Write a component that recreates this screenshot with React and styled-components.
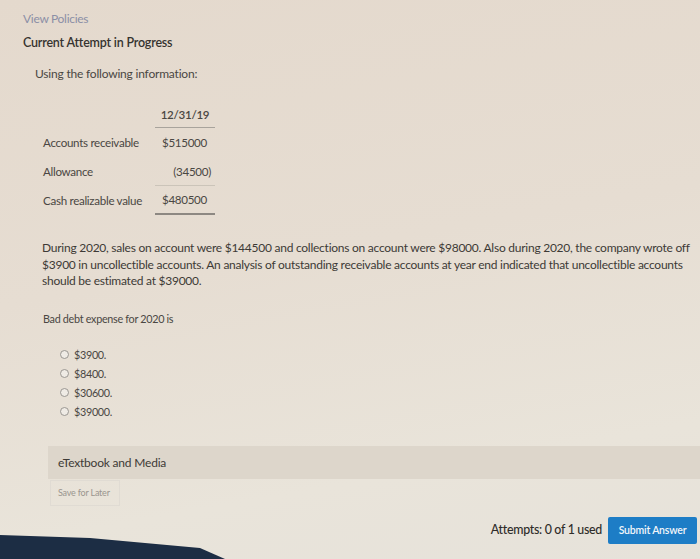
import React from "react";
import styled, { createGlobalStyle } from "styled-components";

const Global = createGlobalStyle`
  html, body { margin: 0; padding: 0; }
  body {
    width: 700px; height: 559px; overflow: hidden;
    font-family: Lato, "Open Sans", "Liberation Sans", sans-serif;
    color: #3a3835;
  }
`;

const Page = styled.div`
  position: relative;
  width: 700px;
  height: 559px;
  overflow: hidden;
  box-sizing: border-box;
  padding: 11px 0 0 23px;
  background: linear-gradient(170deg, #e4d9cd 0%, #e6ddd2 45%, #e9e4da 80%, #e6e2da 100%);
  display: flex;
  flex-direction: column;
`;

const ViewLink = styled.div`
  font-size: 12px;
  color: #8b8fa6;
  letter-spacing: -0.3px;
  line-height: 16px;
`;

const AttemptTitle = styled.div`
  margin-top: 8px;
  font-size: 12.5px;
  font-weight: 600;
  color: #35332f;
  line-height: 16px;
  letter-spacing: -0.2px;
`;

const Question = styled.div`
  padding-left: 12px;
  margin-top: 15px;
  display: flex;
  flex-direction: column;
`;

const Lead = styled.div`
  font-size: 12px;
  color: #4a4743;
  line-height: 16px;
  letter-spacing: -0.2px;
`;

const Table = styled.div`
  margin-top: 19px;
  margin-left: 8px;
  display: grid;
  grid-template-columns: 112px 60px;
  font-size: 11.6px;
  color: #4a4743;
  letter-spacing: -0.3px;
`;

const Cell = styled.div`
  height: ${(p) => p.$h || 28}px;
  display: flex;
  align-items: center;
  justify-content: ${(p) => p.$align || "flex-start"};
  padding-left: ${(p) => p.$pl || 0}px;
  padding-right: ${(p) => p.$pr || 0}px;
  box-sizing: border-box;
  border-bottom: ${(p) => p.$border || "none"};
  font-weight: ${(p) => (p.$bold ? 600 : 400)};
  white-space: nowrap;
`;

const Paragraph = styled.p`
  margin: 25px 0 0 7px;
  width: 652px;
  font-size: 12px;
  line-height: 16.5px;
  color: #3d3a36;
  letter-spacing: -0.25px;
`;

const Prompt = styled.div`
  margin: 22px 0 0 8px;
  font-size: 10.8px;
  color: #4a4743;
  letter-spacing: -0.3px;
`;

const Options = styled.div`
  margin: 23px 0 0 25px;
  display: flex;
  flex-direction: column;
  gap: 5px;
`;

const Option = styled.label`
  display: flex;
  align-items: center;
  gap: 5px;
  font-size: 10.8px;
  color: #4a4743;
  letter-spacing: -0.3px;
  height: 14px;
`;

const Radio = styled.span`
  width: 7px;
  height: 7px;
  border-radius: 50%;
  border: 1px solid #9a9792;
  background: #efebe5;
`;

const MediaBar = styled.div`
  margin: 27px 0 0 25px;
  height: 33px;
  background: #ddd6cb;
  display: flex;
  align-items: center;
  padding-left: 10px;
  font-size: 12px;
  color: #3d3a36;
  letter-spacing: -0.2px;
`;

const SaveButton = styled.div`
  margin: 1px 0 0 27px;
  width: 70px;
  height: 26px;
  box-sizing: border-box;
  border: 1px solid #e0dbd3;
  display: flex;
  align-items: center;
  padding-left: 7px;
  font-size: 9px;
  color: #9a958e;
  letter-spacing: -0.2px;
`;

const Footer = styled.div`
  margin-top: 11px;
  padding-right: 3px;
  display: flex;
  justify-content: flex-end;
  align-items: center;
  gap: 6px;
`;

const Attempts = styled.div`
  font-size: 12.4px;
  color: #2e2c29;
  letter-spacing: -0.3px;
  font-weight: 500;
  padding-bottom: 2px;
`;

const SubmitButton = styled.button`
  width: 89px;
  height: 27px;
  border: none;
  border-radius: 2px;
  background: #1d7dc6;
  color: #f2f6fa;
  font-family: inherit;
  font-size: 10.5px;
  font-weight: 600;
  letter-spacing: -0.2px;
  padding: 0;
`;

const Bezel = styled.svg`
  position: absolute;
  left: 0;
  bottom: 0;
  width: 700px;
  height: 30px;
`;

const rows = [
  { label: "Accounts receivable", value: "$515000", align: "flex-start" },
  { label: "Allowance", value: "(34500)", align: "flex-end", border: "1px solid #cbc4b9" },
  { label: "Cash realizable value", value: "$480500", align: "flex-start", border: "2px solid #8d8882" },
];

const options = ["$3900.", "$8400.", "$30600.", "$39000."];

export default function App() {
  return (
    <>
      <Global />
      <Page>
        <ViewLink>View Policies</ViewLink>
        <AttemptTitle>Current Attempt in Progress</AttemptTitle>
        <Question>
          <Lead>Using the following information:</Lead>
          <Table>
            <Cell $h={27} />
            <Cell $h={27} $align="center" $bold $border="1px solid #a8a39c">12/31/19</Cell>
            {rows.map((r) => (
              <React.Fragment key={r.label}>
                <Cell $h={29}>{r.label}</Cell>
                <Cell
                  $h={29}
                  $align={r.align}
                  $pl={r.align === "flex-start" ? 7 : 0}
                  $pr={r.align === "flex-end" ? 4 : 0}
                  $border={r.border}
                >
                  {r.value}
                </Cell>
              </React.Fragment>
            ))}
          </Table>
          <Paragraph>
            During 2020, sales on account were $144500 and collections on account were $98000. Also during 2020, the company wrote off $3900 in uncollectible accounts. An analysis of outstanding receivable accounts at year end indicated that uncollectible accounts should be estimated at $39000.
          </Paragraph>
          <Prompt>Bad debt expense for 2020 is</Prompt>
          <Options>
            {options.map((o) => (
              <Option key={o}>
                <Radio />
                {o}
              </Option>
            ))}
          </Options>
        </Question>
        <MediaBar>eTextbook and Media</MediaBar>
        <SaveButton>Save for Later</SaveButton>
        <Footer>
          <Attempts>Attempts: 0 of 1 used</Attempts>
          <SubmitButton>Submit Answer</SubmitButton>
        </Footer>
        <Bezel viewBox="0 0 700 30" preserveAspectRatio="none">
          <path d="M0 6 L90 9 L200 19 L225 30 L0 30 Z" fill="#1c2d44" />
        </Bezel>
      </Page>
    </>
  );
}
